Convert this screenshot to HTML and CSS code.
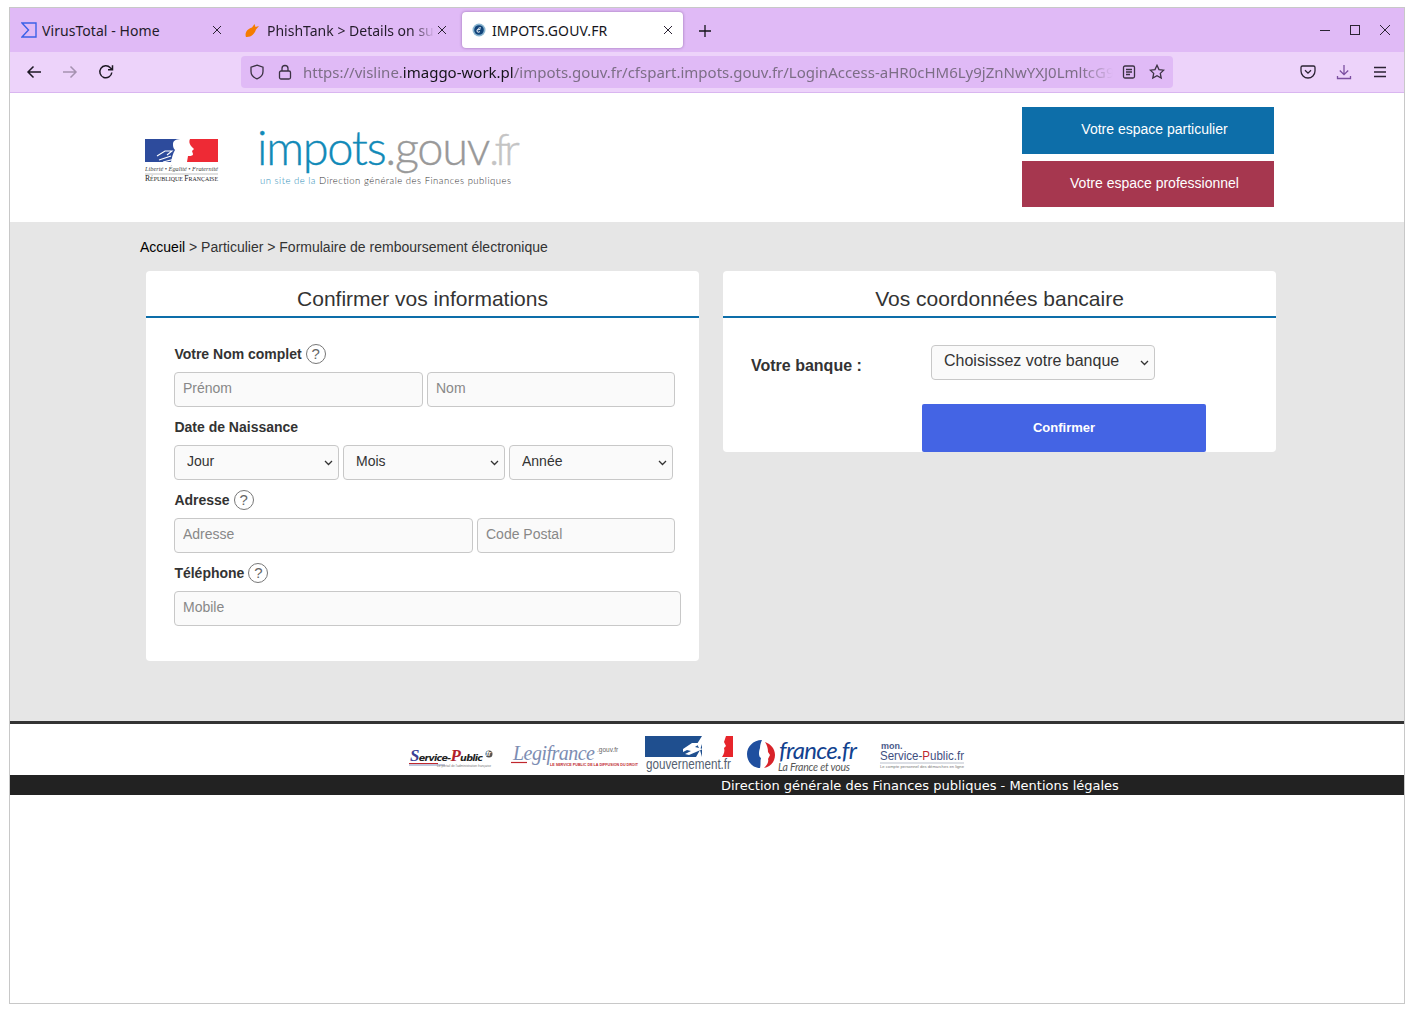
FILE: index.html
```html
<!DOCTYPE html>
<html lang="fr">
<head>
<meta charset="utf-8">
<title>IMPOTS.GOUV.FR</title>
<link rel="stylesheet" href="styles.css">
</head>
<body>
<div class="window">
  <div class="tabbar">
    <div class="tab tab-a">
      <svg class="favicon" width="16" height="16" viewBox="0 0 16 16"><path d="M1 1h14v14H1l6.500-7z" fill="none" stroke="#3b61e8" stroke-width="1.400"/></svg>
      <span class="tab-title">VirusTotal - Home</span>
      <svg class="tab-close" width="10" height="10" viewBox="0 0 10 10"><path d="M1 1l8 8M9 1l-8 8"/></svg>
    </div>
    <div class="tab tab-b">
      <svg class="favicon" width="16" height="16" viewBox="0 0 16 16"><path d="M1 15c-1.500-4 1-8 6-9.500L9.500 2l1 3 3.500-1-3 3.500c-1 4-5 8-10 7.500z" fill="#f57c00"/></svg>
      <span class="tab-title tab-fade">PhishTank &gt; Details on su</span>
      <svg class="tab-close" width="10" height="10" viewBox="0 0 10 10"><path d="M1 1l8 8M9 1l-8 8"/></svg>
    </div>
    <div class="tab tab-c">
      <svg class="favicon" width="14" height="14" viewBox="0 0 14 14"><circle cx="7" cy="7" r="6.500" fill="#8ab6d0"/><circle cx="7" cy="7" r="4.800" fill="#11447a"/><path d="M9 5C7.500 4 5 6 5 8c0 1.500 2 1.500 3 .5M5.500 7L8.500 6" fill="none" stroke="#fff" stroke-width="1"/></svg>
      <span class="tab-title">IMPOTS.GOUV.FR</span>
      <svg class="tab-close" width="10" height="10" viewBox="0 0 10 10"><path d="M1 1l8 8M9 1l-8 8"/></svg>
    </div>
    <svg class="new-tab" width="12" height="12" viewBox="0 0 12 12"><path d="M6 0v12M0 6h12"/></svg>
    <div class="win-controls">
      <svg width="12" height="12" viewBox="0 0 12 12"><path d="M1 6.500h10"/></svg>
      <svg width="12" height="12" viewBox="0 0 12 12"><rect x="1.500" y="1.500" width="9" height="9"/></svg>
      <svg width="12" height="12" viewBox="0 0 12 12"><path d="M1 1l10 10M11 1L1 11"/></svg>
    </div>
  </div>
  <div class="toolbar">
    <div class="nav">
      <svg width="16" height="16" viewBox="0 0 16 16"><path d="M15 8H2M7.500 2.500L2 8l5.500 5.500"/></svg>
      <svg class="disabled" width="16" height="16" viewBox="0 0 16 16"><path d="M1 8h13M8.500 2.500L14 8l-5.500 5.500"/></svg>
      <svg width="16" height="16" viewBox="0 0 16 16"><path d="M13.800 8.500a6 6 0 1 1-1.500-4.700L14 5.500M14.500 1.200v4.500H10"/></svg>
    </div>
    <div class="urlbar">
      <svg class="url-icon" width="16" height="16" viewBox="0 0 16 16"><path d="M8 1.200l6 2v4.300c0 3.500-2.500 6-6 7.300-3.500-1.300-6-3.800-6-7.300V3.200z"/></svg>
      <svg class="url-icon" width="14" height="16" viewBox="0 0 14 16"><rect x="1.500" y="7" width="11" height="8" rx="1.500"/><path d="M4 7V4.500a3 3 0 0 1 6 0V7"/></svg>
      <div class="url"><span class="url-dim">https://visline.</span><span class="url-main">imaggo-work.pl</span><span class="url-dim">/impots.gouv.fr/cfspart.impots.gouv.fr/LoginAccess-aHR0cHM6Ly9jZnNwYXJ0LmltcG9</span></div>
      <svg class="url-icon" width="14" height="14" viewBox="0 0 14 14"><rect x="1.500" y="1" width="11" height="12" rx="1.500"/><path d="M4 4.500h6M4 7h6M4 9.500h4"/></svg>
      <svg class="url-icon" width="16" height="16" viewBox="0 0 16 16"><path d="M8 1.300l2 4.300 4.700.6-3.400 3.200.9 4.700L8 11.800l-4.200 2.300.9-4.700L1.300 6.200 6 5.600z"/></svg>
    </div>
    <div class="tools">
      <svg width="16" height="16" viewBox="0 0 16 16"><path d="M2.500 2h11A1.500 1.500 0 0 1 15 3.500V7a7 7 0 0 1-14 0V3.500A1.500 1.500 0 0 1 2.500 2zM5 6.200l3 3 3-3"/></svg>
      <svg class="dl" width="16" height="16" viewBox="0 0 16 16"><path d="M8 1v9.500M3.800 6.500L8 10.700l4.200-4.200M1.500 12v2.500h13V12"/></svg>
      <svg width="16" height="16" viewBox="0 0 16 16"><path d="M2 3.500h12M2 8h12M2 12.500h12"/></svg>
    </div>
  </div>

  <header class="site-header">
    <svg class="rf-logo" width="74" height="44" viewBox="0 0 74 44">
      <rect x="0" y="0" width="40" height="23" fill="#2d4b9c"/>
      <rect x="40" y="0" width="33" height="23" fill="#ee2a35"/>
      <path d="M28 5C28 1 32 0 37 0h8c-1 2-1 4 1 7l3 3-2 2 1 3c0 2-3 2-5 2l-1 6H26c1-5 2-9 4-12-2-2-2-4-2-6z" fill="#fff"/>
      <path d="M12 17l8-5h7l-5 4M14 21l12-4M18 23l12-3" fill="none" stroke="#fff" stroke-width="1.100"/>
      <text class="rf-motto" x="0" y="32" textLength="73" lengthAdjust="spacingAndGlyphs">Liberté • Égalité • Fraternité</text>
      <path d="M0 35h73" stroke="#999" stroke-width=".6"/>
      <text class="rf-name" x="0" y="42" textLength="73" lengthAdjust="spacingAndGlyphs"><tspan class="rf-cap">R</tspan>ÉPUBLIQUE <tspan class="rf-cap">F</tspan>RANÇAISE</text>
    </svg>
    <svg class="impots-logo" width="262" height="62" viewBox="0 0 262 62">
      <text class="imp-main" x="0" y="37"><tspan class="imp-blue">impots</tspan><tspan class="imp-grey">.gouv</tspan><tspan class="imp-light">.fr</tspan></text>
      <text class="imp-sub" x="3" y="56" textLength="251"><tspan class="imp-sub-blue">un site de la </tspan>Direction générale des Finances publiques</text>
    </svg>
    <div class="space-buttons">
      <a class="space-btn space-blue">Votre espace particulier</a>
      <a class="space-btn space-red">Votre espace professionnel</a>
    </div>
  </header>

  <main class="content">
    <nav class="crumbs"><span class="crumb-home">Accueil</span> &gt; Particulier &gt; Formulaire de remboursement électronique</nav>
    <div class="cards">
      <section class="card card-left">
        <h2 class="card-title">Confirmer vos informations</h2>
        <div class="form">
          <div class="label">Votre Nom complet <span class="help">?</span></div>
          <div class="row">
            <input class="field w-249" placeholder="Prénom">
            <input class="field w-248" placeholder="Nom">
          </div>
          <div class="label">Date de Naissance</div>
          <div class="row">
            <select class="field sel w-165"><option>Jour</option></select>
            <select class="field sel w-162"><option>Mois</option></select>
            <select class="field sel w-164"><option>Année</option></select>
          </div>
          <div class="label">Adresse <span class="help">?</span></div>
          <div class="row">
            <input class="field w-299" placeholder="Adresse">
            <input class="field w-198" placeholder="Code Postal">
          </div>
          <div class="label">Téléphone <span class="help">?</span></div>
          <div class="row">
            <input class="field w-507" placeholder="Mobile">
          </div>
        </div>
      </section>
      <section class="card card-right">
        <h2 class="card-title">Vos coordonnées bancaire</h2>
        <div class="bank-row">
          <div class="bank-label">Votre banque :</div>
          <select class="field sel bank-select"><option>Choisissez votre banque</option></select>
        </div>
        <button class="confirm" type="button">Confirmer</button>
      </section>
    </div>
  </main>

  <footer class="site-footer">
    <div class="partners">
      <svg class="partner p1" width="86" height="24" viewBox="0 0 86 24">
        <text class="sp-word" x="1" y="15" textLength="73"><tspan class="sp-big-blue">S</tspan>ervice-<tspan class="sp-big-red">P</tspan>ublic</text>
        <circle cx="80" cy="8" r="3.500" fill="#555"/>
        <text class="sp-fr" x="75" y="10">.fr</text>
        <path d="M0 17.500h29" stroke="#c0272d" stroke-width="1"/><path d="M0 19h36" stroke="#34448c" stroke-width=".6"/>
        <text class="sp-tag" x="28" y="21" textLength="54" lengthAdjust="spacingAndGlyphs">Le portail de l'administration française</text>
      </svg>
      <svg class="partner p2" width="128" height="28" viewBox="0 0 128 28">
        <text class="lg-word" x="2" y="18" textLength="82">Legifrance</text>
        <text class="lg-gouv" x="86" y="10">.gouv.fr</text>
        <path d="M0 20.500h16" stroke="#c0272d" stroke-width="1.200"/>
        <text class="lg-tag" x="39" y="24" textLength="88" lengthAdjust="spacingAndGlyphs">LE SERVICE PUBLIC DE LA DIFFUSION DU DROIT</text>
      </svg>
      <svg class="partner p3" width="88" height="36" viewBox="0 0 88 36">
        <rect x="0" y="0" width="57" height="21" fill="#1f4f8f"/>
        <path d="M81 0h7v21H77c2-3 3-6 2-9l2-2-2-4z" fill="#e7252b"/>
        <path d="M38 13l9-6h9l-6 4 8 2-14 6-4-1 6-3-4-1-4 2z" fill="#fff"/>
        <path d="M57 0v8l-2 6 2 7h-6l4-7-3-6z" fill="#fff"/>
        <text class="gv-word" x="1" y="33" textLength="85" lengthAdjust="spacingAndGlyphs">gouvernement.fr</text>
      </svg>
      <svg class="partner p4" width="111" height="34" viewBox="0 0 111 34">
        <path d="M15 2C6 2 0 9 0 16c0 8 6 14 13 14 1-4 0-7 1-10-3-2-2-7-1-10 0-3 1-6 2-8z" fill="#1f4f9f"/>
        <path d="M18 4c6 2 10 7 10 13 0 7-5 12-11 13 3-3 5-6 4-9l2-4-2-3c0-4-1-7-3-10z" fill="#d8232a"/>
        <text class="fr-word" x="32" y="21" textLength="78">france.fr</text>
        <text class="fr-tag" x="31" y="33" textLength="72">La France et vous</text>
      </svg>
      <svg class="partner p5" width="86" height="30" viewBox="0 0 86 30">
        <text class="ms-mon" x="1" y="8">mon.</text>
        <text class="ms-word" x="0" y="19" textLength="84" lengthAdjust="spacingAndGlyphs">Service-<tspan class="ms-red">P</tspan>ublic.fr</text>
        <path d="M0 22h84" stroke="#8b93a8" stroke-width=".6"/>
        <text class="ms-tag" x="0" y="26.500" textLength="84" lengthAdjust="spacingAndGlyphs">Le compte personnel des démarches en ligne</text>
      </svg>
    </div>
    <div class="legal"><span class="legal-text">Direction générale des Finances publiques - Mentions légales</span></div>
  </footer>
</div>
</body>
</html>
```
FILE: styles.css
```css
* { box-sizing: border-box; }
html, body { margin: 0; padding: 0; background: #fff; }
body { height: 1013px; overflow: hidden; padding: 7px 9px 9px; }

.window {
  width: 1396px;
  height: 997px;
  border: 1px solid #c8c8c8;
  background: #fff;
  display: flex;
  flex-direction: column;
  font-family: "Liberation Sans", Arial, sans-serif;
}

/* browser chrome */
.tabbar {
  height: 44px;
  flex: none;
  background: #e0baf6;
  display: flex;
  align-items: center;
  font-family: "Noto Sans", sans-serif;
  font-size: 14px;
  color: #241c2b;
}
.tab { display: flex; align-items: center; height: 36px; flex: none; }
.tab-a { width: 225px; padding-left: 11px; }
.tab-b { width: 225px; padding-left: 10px; }
.tab-c {
  width: 221px;
  margin-left: 2px;
  padding-left: 10px;
  background: #fff;
  border-radius: 4px;
  box-shadow: 0 0 3px rgba(60, 20, 90, .45);
  color: #15141a;
}
.favicon { flex: none; margin-right: 5px; }
.tab-b .favicon, .tab-c .favicon { margin-right: 6px; }
.tab-title { white-space: nowrap; overflow: hidden; }
.tab-a .tab-title { width: 170px; letter-spacing: .06px; }
.tab-b .tab-title { width: 168px; }
.tab-c .tab-title { width: 171px; letter-spacing: .12px; }
.tab-fade {
  -webkit-mask-image: linear-gradient(to right, #000 86%, transparent 100%);
  mask-image: linear-gradient(to right, #000 86%, transparent 100%);
}
.tab-close { flex: none; fill: none; stroke: #2b2333; stroke-width: 1; }
.tab-b .tab-close { margin-left: 2px; }
.new-tab { flex: none; margin-left: 16px; margin-top: 1px; stroke: #15141a; stroke-width: 1.300; fill: none; }
.win-controls { margin-left: auto; display: flex; gap: 18px; padding: 0 13px 0 0; }
.win-controls svg { fill: none; stroke: #2b2333; stroke-width: 1; }

.toolbar {
  height: 41px;
  flex: none;
  background: #edd3fa;
  border-bottom: 1px solid #d9b6f0;
  display: flex;
  align-items: center;
}
.nav { width: 231px; flex: none; display: flex; gap: 20px; padding-left: 16px; }
.nav svg { fill: none; stroke: #1d1823; stroke-width: 1.500; }
.nav svg.disabled { stroke: #a592b0; }
.urlbar {
  width: 932px;
  height: 32px;
  flex: none;
  background: #e0baf6;
  border-radius: 4px;
  display: flex;
  align-items: center;
  padding-left: 8px;
  font-family: "Noto Sans", sans-serif;
  font-size: 15px;
}
.url-icon { flex: none; fill: none; stroke: #3b3243; stroke-width: 1.300; }
.urlbar .url-icon:nth-of-type(2) { margin-left: 13px; margin-right: 11px; }
.urlbar .url-icon:nth-of-type(3) { margin-left: 9px; }
.urlbar .url-icon:nth-of-type(4) { margin-left: 13px; }
.url {
  width: 810px;
  flex: none;
  white-space: nowrap;
  overflow: hidden;
  -webkit-mask-image: linear-gradient(to right, #000 96%, transparent 100%);
  mask-image: linear-gradient(to right, #000 96%, transparent 100%);
}
.url-dim { color: #7c6e86; }
.url-main { color: #15141a; }
.tools { display: flex; gap: 20px; margin-left: auto; padding-right: 16px; }
.tools svg { fill: none; stroke: #2b2333; stroke-width: 1.300; }
.tools svg.dl { stroke: #7b4ea0; }

/* site header */
.site-header {
  height: 129px;
  flex: none;
  display: flex;
  align-items: flex-start;
  padding: 14px 130px 0 135px;
  background: #fff;
}
.rf-logo { flex: none; margin-top: 32px; }
.rf-motto { font: italic 6px "Liberation Serif", serif; fill: #444; }
.rf-name { font: 5.800px "Liberation Serif", serif; fill: #222; }
.rf-cap { font-size: 7.500px; }
.impots-logo { flex: none; margin: 21px 0 0 38px; overflow: visible; }
.imp-main { font: 300 47px Lato, sans-serif; letter-spacing: -1.300px; stroke-width: .35px; }
.imp-blue { fill: #118ab8; stroke: #118ab8; }
.imp-grey { fill: #999; stroke: #999; }
.imp-light { fill: #c4c4c4; stroke: #c4c4c4; font-size: 44px; letter-spacing: -5px; }
.imp-sub { font: 300 9.500px Lato, sans-serif; fill: #333; }
.imp-sub-blue { fill: #2d8db8; }
.space-buttons { margin-left: auto; display: flex; flex-direction: column; gap: 7px; }
.space-btn {
  width: 252px;
  height: 47px;
  display: flex;
  align-items: center;
  justify-content: center;
  color: #fff;
  font-size: 14px;
  padding: 0 0 3px 13px;
}
.space-blue { background: #0d6ea9; }
.space-red { background: #a6374f; height: 46px; }

/* main */
.content {
  height: 499px;
  flex: none;
  background: #e6e6e6;
  padding: 0 128px 0 136px;
}
.crumbs {
  height: 49px;
  padding-top: 17px;
  margin-left: -6px;
  font-size: 14px;
  line-height: 16px;
  color: #333;
}
.crumb-home { color: #000; }
.cards { display: flex; gap: 24px; align-items: flex-start; }
.card { width: 553px; background: #fff; border-radius: 4px; }
.card-left { height: 390px; }
.card-right { height: 181px; overflow: hidden; }
.card-title {
  margin: 0;
  height: 47px;
  padding-top: 16px;
  border-bottom: 2px solid #0d6ea9;
  text-align: center;
  font-size: 21px;
  font-weight: 400;
  line-height: 24px;
  color: #333;
}
.form { padding: 26px 0 0 28px; }
.label {
  height: 19px;
  margin-bottom: 9px;
  padding-left: .4px;
  display: flex;
  align-items: center;
  gap: 4px;
  font-size: 14px;
  font-weight: 700;
  color: #333;
}
.help {
  width: 20px;
  height: 20px;
  flex: none;
  border: 1.500px solid #777;
  border-radius: 50%;
  display: inline-flex;
  align-items: center;
  justify-content: center;
  font-size: 15px;
  font-weight: 400;
  color: #666;
}
.row { display: flex; gap: 4px; margin-bottom: 10px; }
.field {
  height: 35px;
  flex: none;
  border: 1px solid #c8c8c8;
  border-radius: 4px;
  background-color: #fafafa;
  font-family: "Liberation Sans", Arial, sans-serif;
  font-size: 14px;
  color: #333;
  padding: 0 8px 4px;
  outline: none;
}
.field::placeholder { color: #888; opacity: 1; }
.sel {
  appearance: none;
  -webkit-appearance: none;
  padding-left: 12px;
  background-image: url("data:image/svg+xml,%3Csvg xmlns='http://www.w3.org/2000/svg' width='9' height='6'%3E%3Cpath d='M1 1l3.500 3.500L8 1' fill='none' stroke='%23333' stroke-width='1.300'/%3E%3C/svg%3E");
  background-repeat: no-repeat;
  background-position: right 5px center;
}
.w-249 { width: 249px; }
.w-248 { width: 248px; }
.w-165 { width: 165px; }
.w-162 { width: 162px; }
.w-164 { width: 164px; }
.w-299 { width: 299px; }
.w-198 { width: 198px; }
.w-507 { width: 507px; }

.bank-row { display: flex; align-items: flex-start; padding: 27px 0 0 28px; height: 86px; }
.bank-label { width: 180px; padding-top: 12px; font-size: 16px; line-height: 18px; font-weight: 700; color: #333; }
.bank-select { width: 224px; font-size: 16px; }
.confirm {
  display: block;
  width: 284px;
  height: 48px;
  margin-left: 199px;
  padding: 0 0 2px;
  border: 0;
  border-radius: 2px;
  background: #4464e4;
  color: #fff;
  font: 700 13px "Liberation Sans", Arial, sans-serif;
}

/* footer */
.site-footer { flex: 1; border-top: 3px solid #333; background: #fff; }
.partners { height: 51px; display: flex; align-items: flex-end; padding-left: 399px; }
.partner { flex: none; display: block; overflow: visible; }
.p1 { margin-bottom: 5px; }
.p2 { margin-left: 16px; margin-bottom: 5px; }
.p3 { margin-left: 6px; margin-bottom: 3px; }
.p4 { margin-left: 14px; margin-bottom: 3px; }
.p5 { margin-left: 22px; margin-bottom: 4px; }
.sp-word { font: italic 700 9.500px "DejaVu Sans", sans-serif; fill: #222; }
.sp-big-blue { font: italic 700 17px "Liberation Serif", serif; fill: #3b3f96; }
.sp-big-red { font: italic 700 17px "Liberation Serif", serif; fill: #b21f2d; }
.sp-fr { font: italic 700 7px "Liberation Sans", sans-serif; fill: #fff; }
.sp-tag { font: 3.500px "Liberation Sans", sans-serif; fill: #777; }
.lg-word { font: italic 20px "Liberation Serif", serif; fill: #7d8db2; }
.lg-gouv { font: 6.500px "Liberation Sans", sans-serif; fill: #666; }
.lg-tag { font: 700 3.400px "Liberation Sans", sans-serif; fill: #c0272d; }
.gv-word { font: 14px "Liberation Sans", sans-serif; fill: #555f70; }
.fr-word { font: italic 24px Lato, sans-serif; fill: #12428f; }
.fr-tag { font: italic 10.500px Lato, sans-serif; fill: #555; }
.ms-mon { font: 700 9px "Liberation Sans", sans-serif; fill: #4a5a8a; }
.ms-word { font: 12px "Liberation Sans", sans-serif; fill: #3f4f7f; }
.ms-red { fill: #c0272d; }
.ms-tag { font: 4px "Liberation Sans", sans-serif; fill: #777; }
.legal {
  height: 20px;
  background: #222;
  color: #fff;
  font: 13px/21px "DejaVu Sans", sans-serif;
  padding-left: 711px;
  white-space: nowrap;
}
```
